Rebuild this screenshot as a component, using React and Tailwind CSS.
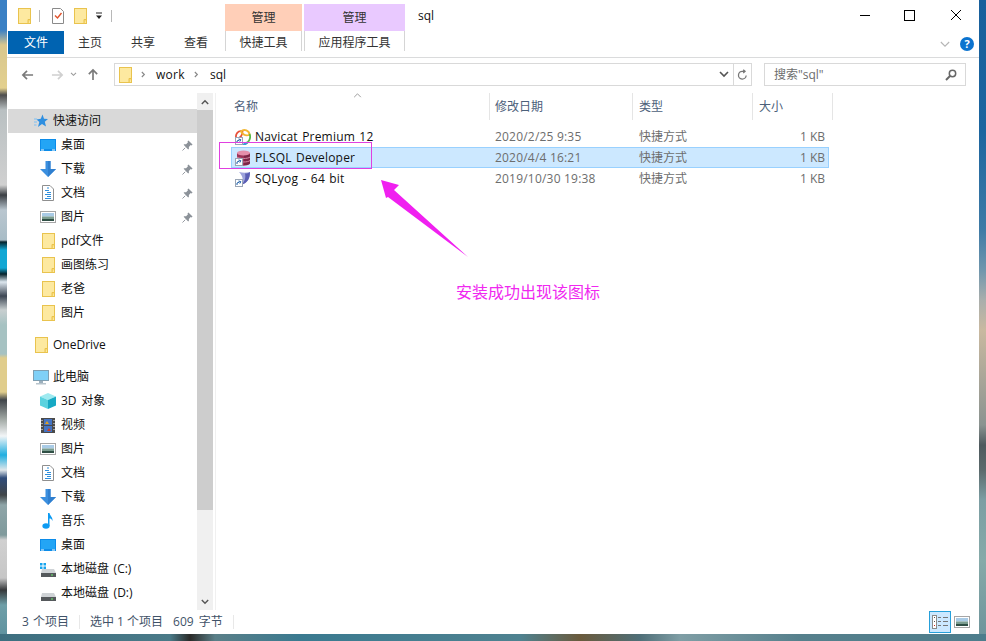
import React from 'react';

const font = "font-['Open_Sans','Noto_Sans_CJK_SC',sans-serif]";

function Folder({ className = 'w-[13px] h-[16px]' }) {
  return (
    <svg viewBox="0 0 13 16" className={className}>
      <rect x="0.5" y="0.5" width="12" height="15" fill="#fde9a0" stroke="#e9c34e" />
      <path d="M10 15.5V11.5H12.5" fill="#fbd96f" stroke="#e9c34e" />
    </svg>
  );
}

function Desktop() {
  return (
    <svg viewBox="0 0 16 12" className="w-[16px] h-[12px]">
      <rect width="16" height="12" fill="#0c8ce9" />
      <rect x="1" y="1" width="14" height="9" fill="#23a5f5" />
      <rect x="1" y="10.5" width="3" height="1" fill="#ffffff" />
      <rect x="12" y="10.5" width="3" height="1" fill="#ffffff" />
    </svg>
  );
}

function Download() {
  return (
    <svg viewBox="0 0 16 16" className="w-[16px] h-[16px]">
      <path d="M5.5 0H10.5V8H16L8 16L0 8H5.5Z" fill="#3b8fdf" />
      <path d="M8 0H10.5V8H16L8 16Z" fill="#2f7fcf" />
    </svg>
  );
}

function Doc() {
  return (
    <svg viewBox="0 0 12 16" className="w-[12px] h-[16px]">
      <path d="M0.5 0.5H8L11.5 4V15.5H0.5Z" fill="#fff" stroke="#8f8f8f" />
      <path d="M5 3H7M3 5.5H7M5 7.5H9M3 9.5H9M5 11.5H9M3 13.5H9" stroke="#2f8fdc" />
    </svg>
  );
}

function Picture() {
  return (
    <svg viewBox="0 0 16 12" className="w-[16px] h-[12px]">
      <rect x="0.5" y="0.5" width="15" height="11" fill="#fff" stroke="#a6a6a6" />
      <rect x="2" y="2" width="12" height="3.5" fill="#a9cbe6" />
      <rect x="2" y="5.5" width="12" height="2.5" fill="#7b9d90" />
      <rect x="2" y="8" width="12" height="2" fill="#2f4f45" />
    </svg>
  );
}

function Pin() {
  return (
    <svg viewBox="0 0 12 12" className="w-[11px] h-[11px]">
      <path d="M7 0.5L11.5 5L10.5 6L9.5 5.5L7.5 7.5L7.5 10L6.5 10L2 5.5V4.5L4.5 4.5L6.5 2.5L6 1.5Z" fill="#8c9299" />
      <path d="M3.5 8.5L0.5 11.5" stroke="#8c9299" />
    </svg>
  );
}

function Star() {
  return (
    <svg viewBox="0 0 14 14" className="w-[14px] h-[14px]">
      <path d="M8.5 0.5L10 4.8L14 5L10.8 7.8L12 12.5L8 10L4 13L5.3 8L2.5 5.5L6.8 4.8Z" fill="#2f8fe0" />
      <path d="M0 5H3M0 8H3M0 11H2.5" stroke="#7cc0f5" />
    </svg>
  );
}

function Computer() {
  return (
    <svg viewBox="0 0 16 15" className="w-[16px] h-[15px]">
      <rect x="0.5" y="0.5" width="15" height="10" fill="#7fd0f7" stroke="#7f9fb2" />
      <rect x="6" y="11" width="4" height="2" fill="#9db0bd" />
      <rect x="3" y="13" width="10" height="1.5" fill="#b7c4cc" />
    </svg>
  );
}

function Cube() {
  return (
    <svg viewBox="0 0 16 16" className="w-[16px] h-[16px]">
      <path d="M8 0L16 3.5L8 7L0 3.5Z" fill="#9feaf0" />
      <path d="M0 3.5L8 7V16L0 12.5Z" fill="#5ad2df" />
      <path d="M16 3.5L8 7V16L16 12.5Z" fill="#16a9c4" />
    </svg>
  );
}

function Film() {
  return (
    <svg viewBox="0 0 14 15" className="w-[14px] h-[15px]">
      <rect width="14" height="15" fill="#4b4b4b" />
      <rect x="3" y="1" width="8" height="6" fill="#4474c4" />
      <rect x="3" y="8" width="8" height="6" fill="#4474c4" />
      <path d="M4 6L6 3L8 6Z" fill="#e0a020" />
      <path d="M6 13L8 10L10 13Z" fill="#d04020" />
      <path d="M1 2V3M1 5V6M1 8V9M1 11V12M13 2V3M13 5V6M13 8V9M13 11V12" stroke="#fff" />
    </svg>
  );
}

function Music() {
  return (
    <svg viewBox="0 0 12 16" className="w-[12px] h-[16px]">
      <ellipse cx="4" cy="13" rx="3.6" ry="2.8" fill="#0d9bf2" />
      <path d="M6 13V0H7.5C8 3 11 4 10.5 8C9.8 6 8.5 5.5 7.5 5.5V13Z" fill="#0d9bf2" />
    </svg>
  );
}

function Drive({ windows }) {
  return (
    <svg viewBox="0 0 16 15" className="w-[16px] h-[15px]">
      {windows && <path d="M0 1H2.5V3.5H0ZM3.5 1H6V3.5H3.5ZM0 4.5H2.5V7H0ZM3.5 4.5H6V7H3.5Z" fill="#17a4ee" />}
      <path d="M2 7H14L16 11H1Z" fill="#cfd3d6" />
      <rect x="1" y="11" width="15" height="4" fill="#55595c" />
      <rect x="11" y="12.5" width="2" height="1" fill="#6cf06c" />
    </svg>
  );
}

function ShortcutBadge() {
  return (
    <svg viewBox="0 0 8 8" className="absolute left-0 bottom-0 w-[8px] h-[8px]">
      <rect x="0.5" y="0.5" width="7" height="7" fill="#fff" stroke="#9aa5b5" />
      <path d="M2 6V4L4.5 3M3.5 2L5.8 2.6L4.8 4.6" fill="none" stroke="#1d5fa8" />
    </svg>
  );
}

function Navicat() {
  return (
    <span className="relative w-[16px] h-[16px] block">
      <svg viewBox="0 0 16 16" className="w-[16px] h-[16px]">
        <path d="M1.5 10C-0.5 5 3.5 1 7.5 2.5C7.5 6 5 9 1.5 10Z" fill="none" stroke="#e8503a" strokeWidth="1.8" />
        <path d="M6 2.5C9 -0.5 14.5 1.5 14.5 6C11 7 8 6 6 2.5Z" fill="none" stroke="#f2b632" strokeWidth="1.8" />
        <path d="M14.5 5C16.5 9 13.5 14.5 9 15" fill="none" stroke="#58b947" strokeWidth="1.8" />
        <path d="M5 14.5C8 16 11 15.5 12.5 13" fill="none" stroke="#3a9be0" strokeWidth="1.8" />
      </svg>
      <ShortcutBadge />
    </span>
  );
}

function Plsql() {
  return (
    <span className="relative w-[16px] h-[16px] block">
      <svg viewBox="0 0 16 16" className="w-[16px] h-[16px]">
        <path d="M2 3V13C2 16.5 15 16.5 15 13V3Z" fill="#9c3358" />
        <path d="M9 3V15.2C12 15 15 14.3 15 13V3Z" fill="#7d2546" />
        <ellipse cx="8.5" cy="3" rx="6.5" ry="2.6" fill="#e58fab" />
        <path d="M2 7C4 9 13 9 15 7M2 10.5C4 12.5 13 12.5 15 10.5" stroke="#d98aa5" fill="none" />
      </svg>
      <ShortcutBadge />
    </span>
  );
}

function Sqlyog() {
  return (
    <span className="relative w-[16px] h-[16px] block">
      <svg viewBox="0 0 16 16" className="w-[16px] h-[16px]">
        <path d="M4 1C8 2 11 2 15 1C15 7 13 12 6 14C9 10 8 5 4 1Z" fill="#9ea3dc" />
        <path d="M10 2.5C12 2.5 13.5 2 15 1C15 7 13 12 6 14C10 11 11 6 10 2.5Z" fill="#5b5eb4" />
      </svg>
      <ShortcutBadge />
    </span>
  );
}

const navItems = [
  { label: '快速访问', icon: <Star />, top: true, active: true },
  { label: '桌面', icon: <Desktop />, pin: true },
  { label: '下载', icon: <Download />, pin: true },
  { label: '文档', icon: <Doc />, pin: true },
  { label: '图片', icon: <Picture />, pin: true },
  { label: 'pdf文件', icon: <Folder /> },
  { label: '画图练习', icon: <Folder /> },
  { label: '老爸', icon: <Folder /> },
  { label: '图片', icon: <Folder /> },
  { label: 'OneDrive', icon: <Folder />, top: true, gap: true },
  { label: '此电脑', icon: <Computer />, top: true, gap: true },
  { label: '3D 对象', icon: <Cube /> },
  { label: '视频', icon: <Film /> },
  { label: '图片', icon: <Picture /> },
  { label: '文档', icon: <Doc /> },
  { label: '下载', icon: <Download /> },
  { label: '音乐', icon: <Music /> },
  { label: '桌面', icon: <Desktop /> },
  { label: '本地磁盘 (C:)', icon: <Drive windows /> },
  { label: '本地磁盘 (D:)', icon: <Drive /> },
];

const files = [
  { name: 'Navicat Premium 12', date: '2020/2/25 9:35', icon: <Navicat /> },
  { name: 'PLSQL Developer', date: '2020/4/4 16:21', icon: <Plsql />, selected: true },
  { name: 'SQLyog - 64 bit', date: '2019/10/30 19:38', icon: <Sqlyog /> },
];

function NavRow({ item }) {
  return (
    <div className={`flex items-center h-[24px] shrink-0 text-[12px] text-[#111] ${item.gap ? 'mt-[8px]' : ''} ${item.active ? 'bg-[#d9d9d9]' : ''}`}>
      <span className={`flex justify-center shrink-0 ${item.top ? 'ml-[25px] w-[16px]' : 'ml-[32px] w-[16px]'}`}>{item.icon}</span>
      <span className={`${item.top ? 'ml-[4px]' : 'ml-[5px]'} whitespace-nowrap [word-spacing:1.5px]`}>{item.label}</span>
      {item.pin && <span className="ml-auto mr-[4px] flex"><Pin /></span>}
    </div>
  );
}

function FileRow({ file }) {
  const rowClass = file.selected ? 'bg-[#cce8ff] border border-[#99d1ff]' : 'border border-transparent';
  return (
    <div className={`grid grid-cols-[258px_144px_120px_76px] items-center w-[598px] h-[21px] text-[12px] ${rowClass}`}>
      <div className="flex items-center pl-[3px] text-[#111]">
        {file.icon}
        <span className="ml-[4px] whitespace-nowrap tracking-[0.2px] [word-spacing:1px]">{file.name}</span>
      </div>
      <span className="pl-[5px] text-[#6d6d6d] tracking-[0.2px]">{file.date}</span>
      <span className="pl-[5px] text-[#6d6d6d]">快捷方式</span>
      <span className="pr-[5px] text-right text-[#6d6d6d]">1 KB</span>
    </div>
  );
}

export default function App() {
  return (
    <div className={`relative w-[986px] h-[641px] overflow-hidden flex flex-col ${font} bg-[#4f7f95]`}>
      <div className="flex h-[634px]">
        {/* desktop behind the window */}
        <div className="w-[7px] shrink-0 bg-[linear-gradient(180deg,#3a80c4_0,#3a80c4_30px,#d8c78e_45px,#e3d08e_88px,#4d4d4d_95px,#b9c0c2_110px,#d0d0d0_185px,#3b3f44_195px,#b9c6cf_210px,#a8bcc6_240px,#06232c_242px,#12a7d4_250px,#12a7d4_268px,#06232c_274px,#dce6ee_282px,#3d4754_296px,#c8cfd0_310px,#a6c2c2_325px,#a6c2c2_354px,#e0cd8c_358px,#e0cd8c_392px,#40454a_400px,#a5aca8_420px,#f2f5f7_436px,#20aee0_455px,#dfe6ea_470px,#2f4c7a_478px,#404548_495px,#8fa5a8_505px,#7f9a9c_535px,#d0d0d0_540px,#c6c6c6_578px,#35383a_590px,#6f9fa8_605px,#5f93a0_634px)]" />
        <div className="w-[972px] shrink-0 h-full bg-white flex flex-col">
          {/* title row */}
          <div className="flex h-[31px] items-start shrink-0">
            <div className="w-[218px] h-full flex items-center shrink-0 pt-[1px]">
              <span className="ml-[11px] flex"><Folder /></span>
              <span className="ml-[8px] w-px h-[12px] bg-[#b8b8b8]" />
              <svg viewBox="0 0 12 16" className="ml-[12px] w-[12px] h-[16px]">
                <path d="M0.5 0.5H8.5L11.5 3.5V15.5H0.5Z" fill="#fff" stroke="#8a8a8a" />
                <path d="M3 7.5L5.5 10L9.5 5" fill="none" stroke="#e0522b" strokeWidth="1.4" />
              </svg>
              <span className="ml-[10px] flex"><Folder /></span>
              <svg viewBox="0 0 8 8" className="ml-[8px] w-[8px] h-[8px]">
                <path d="M1 1H7" stroke="#222" />
                <path d="M1 3.5H7L4 7Z" fill="#222" />
              </svg>
              <span className="ml-[8px] w-px h-[12px] bg-[#b8b8b8]" />
            </div>
            <div className="mt-[4px] w-[77px] h-[27px] bg-[#ffcfb8] flex items-center justify-center text-[12px] text-[#333]">管理</div>
            <div className="ml-[2px] mt-[4px] w-[101px] h-[27px] bg-[#e9c9ff] flex items-center justify-center text-[12px] text-[#333]">管理</div>
            <span className="ml-[13px] mt-[7px] text-[12px] text-[#111]">sql</span>
            <div className="ml-auto h-[31px] flex">
              <svg viewBox="0 0 12 12" className="mt-[9px] mr-[33px] w-[12px] h-[12px]"><path d="M1 6.5H11" stroke="#000" /></svg>
              <svg viewBox="0 0 12 12" className="mt-[9px] mr-[34px] w-[12px] h-[12px]"><rect x="0.5" y="1.5" width="10" height="10" fill="none" stroke="#000" /></svg>
              <svg viewBox="0 0 12 12" className="mt-[9px] mr-[17px] w-[12px] h-[12px]"><path d="M1 1L11 11M11 1L1 11" stroke="#000" /></svg>
            </div>
          </div>

          {/* ribbon tabs */}
          <div className="flex h-[27px] shrink-0 border-b border-[#dadbdc] text-[12px] text-[#333]">
            <div className="ml-px w-[56px] h-[23px] bg-[#0063b1] text-white flex items-center justify-center">文件</div>
            <span className="ml-[14px] mt-[3px]">主页</span>
            <span className="ml-[29px] mt-[3px]">共享</span>
            <span className="ml-[29px] mt-[3px]">查看</span>
            <div className="ml-[17px] w-[77px] h-[20px] border-x border-[#d5d5d5] flex items-center justify-center pt-[4px]">快捷工具</div>
            <div className="ml-[2px] w-[101px] h-[20px] border-x border-[#d5d5d5] flex items-center justify-center pt-[4px]">应用程序工具</div>
            <div className="ml-auto flex items-center h-[26px] pr-[5px]">
              <svg viewBox="0 0 12 8" className="w-[10px] h-[7px]"><path d="M1 1L6 6L11 1" fill="none" stroke="#b5b5b5" strokeWidth="1.3" /></svg>
              <span className="ml-[10px] w-[14px] h-[14px] rounded-full bg-[#0b73cf] text-white text-[11px] font-bold leading-[14px] text-center">?</span>
            </div>
          </div>

          {/* address row */}
          <div className="flex h-[35px] shrink-0 pt-[5px] items-start">
            <div className="w-[107px] h-[23px] flex items-center shrink-0">
              <svg viewBox="0 0 14 12" className="ml-[14px] w-[13px] h-[12px]"><path d="M13 6H2M6.5 1.5L2 6L6.5 10.5" fill="none" stroke="#7a7a7a" strokeWidth="1.8" /></svg>
              <svg viewBox="0 0 14 12" className="ml-[17px] w-[13px] h-[12px]"><path d="M1 6H12M7.5 1.5L12 6L7.5 10.5" fill="none" stroke="#d0d0d0" strokeWidth="1.8" /></svg>
              <svg viewBox="0 0 8 6" className="ml-[6px] w-[7px] h-[5px]"><path d="M1 1L4 4L7 1" fill="none" stroke="#9a9a9a" strokeWidth="1.3" /></svg>
              <svg viewBox="0 0 12 14" className="ml-[10px] w-[12px] h-[13px]"><path d="M6 13V2M1.5 6.5L6 2L10.5 6.5" fill="none" stroke="#7a7a7a" strokeWidth="1.8" /></svg>
            </div>
            <div className="w-[638px] h-[23px] border border-[#d9d9d9] flex items-center text-[12px] text-[#111]">
              <span className="ml-[4px] flex"><Folder /></span>
              <svg viewBox="0 0 6 8" className="ml-[9px] w-[5px] h-[7px]"><path d="M1 1L4 4L1 7" fill="none" stroke="#888" strokeWidth="1.4" /></svg>
              <span className="ml-[10px] tracking-[0.3px]">work</span>
              <svg viewBox="0 0 6 8" className="ml-[9px] w-[5px] h-[7px]"><path d="M1 1L4 4L1 7" fill="none" stroke="#888" strokeWidth="1.4" /></svg>
              <span className="ml-[11px]">sql</span>
              <svg viewBox="0 0 10 7" className="ml-auto mr-[4px] w-[10px] h-[7px]"><path d="M1 1L5 5L9 1" fill="none" stroke="#555" strokeWidth="1.6" /></svg>
              <span className="w-[18px] h-full border-l border-[#d9d9d9] flex items-center justify-center">
                <svg viewBox="0 0 12 12" className="w-[11px] h-[12px]"><path d="M10 6.5A4.2 4.2 0 1 1 6 2H8.5M6.8 0.3L8.8 2L6.8 3.8" fill="none" stroke="#777" strokeWidth="1.4" /></svg>
              </span>
            </div>
            <div className="ml-[12px] w-[202px] h-[23px] border border-[#d9d9d9] flex items-center text-[12px] text-[#6d6d6d]">
              <span className="ml-[9px]">搜索"sql"</span>
              <svg viewBox="0 0 12 12" className="ml-auto mr-[8px] w-[12px] h-[12px]"><circle cx="7.5" cy="4.5" r="3.2" fill="none" stroke="#666" strokeWidth="1.5" /><path d="M5 7L1 11" stroke="#666" strokeWidth="2" /></svg>
            </div>
          </div>

          {/* main */}
          <div className="flex h-[517px] shrink-0">
            <div className="ml-px w-[189px] h-full overflow-hidden flex flex-col pt-[16px] shrink-0">
              {navItems.map((item, i) => <NavRow key={i} item={item} />)}
            </div>
            <div className="w-[16px] h-full bg-[#f0f0f0] flex flex-col shrink-0">
              <div className="h-[17px] flex items-center justify-center">
                <svg viewBox="0 0 10 7" className="w-[8px] h-[6px]"><path d="M1 6L5 2L9 6" fill="none" stroke="#555" strokeWidth="1.8" /></svg>
              </div>
              <div className="h-[400px] bg-[#cdcdcd]" />
              <div className="mt-auto h-[17px] flex items-center justify-center">
                <svg viewBox="0 0 10 7" className="w-[8px] h-[6px]"><path d="M1 1L5 5L9 1" fill="none" stroke="#555" strokeWidth="1.8" /></svg>
              </div>
            </div>
            <div className="ml-[2px] w-px h-full bg-[#f0f0f0]" />
            <div className="flex-1 flex flex-col">
              <div className="grid grid-cols-[274px_143px_120px_80px] w-[617px] h-[27px] text-[12px] text-[#4c607a]">
                <div className="relative pl-[18px] border-r border-[#e5e5e5] flex items-center">
                  名称
                  <svg viewBox="0 0 10 6" className="absolute left-[137px] top-0 w-[9px] h-[5px]"><path d="M1 5L5 1L9 5" fill="none" stroke="#8a8a8a" /></svg>
                </div>
                <div className="pl-[5px] border-r border-[#e5e5e5] flex items-center">修改日期</div>
                <div className="pl-[6px] border-r border-[#e5e5e5] flex items-center">类型</div>
                <div className="pl-[6px] border-r border-[#e5e5e5] flex items-center">大小</div>
              </div>
              <div className="mt-[6px] ml-[15px] flex flex-col">
                {files.map(file => <FileRow key={file.name} file={file} />)}
              </div>
            </div>
          </div>

          {/* status */}
          <div className="flex h-[24px] items-center shrink-0 text-[12px] text-[#3f5268]">
            <span className="ml-[15px] [word-spacing:1px]">3 个项目</span>
            <span className="ml-[10px] w-px h-[14px] bg-[#e8e8e8]" />
            <span className="ml-[10px]">选中 1 个项目</span>
            <span className="ml-[10px] [word-spacing:2px]">609 字节</span>
            <span className="ml-[10px] w-px h-[14px] bg-[#e8e8e8]" />
            <div className="ml-auto mr-[9px] flex items-center">
              <div className="w-[22px] h-[22px] bg-[#cce8ff] border border-[#26a0da] flex items-center justify-center">
                <svg viewBox="0 0 18 16" className="w-[18px] h-[16px]">
                  <rect x="1.5" y="1.5" width="4" height="13" fill="#fff" stroke="#8a8a8a" />
                  <path d="M3 3.5H4M3 7.5H4" stroke="#555" />
                  <path d="M3 11.5H4" stroke="#d02020" />
                  <path d="M7 3.5H10M12 3.5H17M7 7.5H10M12 7.5H17M7 11.5H10M12 11.5H17" stroke="#777" />
                </svg>
              </div>
              <span className="ml-[3px] flex"><Picture /></span>
            </div>
          </div>
        </div>
        <div className="flex-1 bg-[linear-gradient(180deg,#18609c_0,#1c659f_130px,#3f7ba6_230px,#6f96ad_270px,#a9aeac_300px,#c9b9a0_330px,#a8a598_380px,#8a9390_425px,#4f5a5e_445px,#5b6a6c_470px,#7c9ea3_500px,#86aaa9_560px,#6f959c_634px)]" />
      </div>
      <div className="h-[7px] shrink-0 bg-[linear-gradient(90deg,#3d6f80_0,#4a7a88_170px,#2a2a28_190px,#5a7f88_215px,#3a7a90_300px,#4f8290_520px,#6a5a3c_580px,#4f6f78_640px,#7f9ea5_680px,#56808c_800px,#4d7d8c_986px)]" />

      {/* annotations drawn on the screenshot */}
      <div className="absolute left-[219px] top-[142px] w-[153px] h-[27px] border border-[#e040e0]" />
      <svg className="absolute left-0 top-0 w-[986px] h-[641px] pointer-events-none" viewBox="0 0 986 641">
        <path d="M381 180L399 185L394 190L468 257L388 197L386 198Z" fill="#f020f0" />
      </svg>
      <span className="absolute left-[456px] top-[280px] text-[16px] leading-[22px] whitespace-nowrap text-[#f028f0] font-['Noto_Sans_CJK_SC',sans-serif]">安装成功出现该图标</span>
    </div>
  );
}
